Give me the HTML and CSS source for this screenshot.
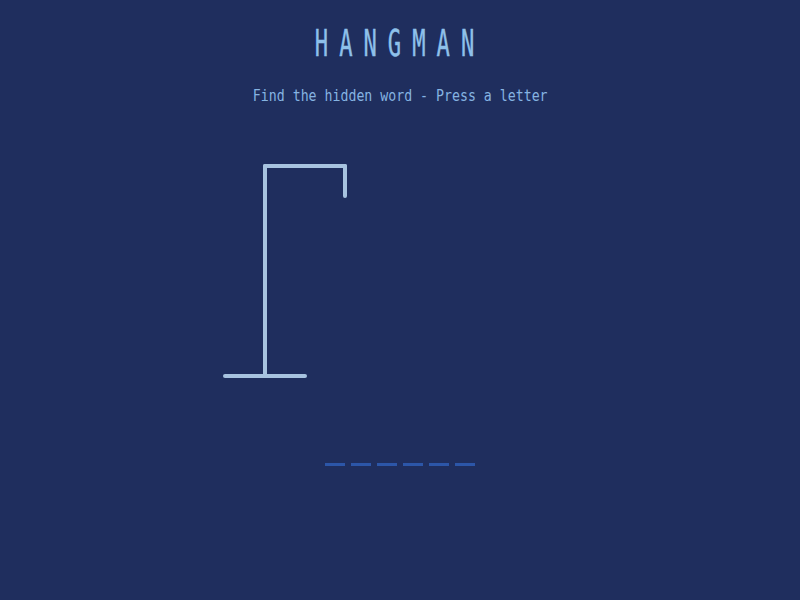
FILE: index.html
```html
<!DOCTYPE html>
<html>
<head>
<meta charset="utf-8">
<link rel="stylesheet" href="styles.css">
</head>
<body>
<main class="game">
  <h1 class="title"><span class="squeeze">HANGMAN</span></h1>
  <p class="hint"><span class="squeeze">Find the hidden word - Press a letter</span></p>
  <svg class="gallows" width="800" height="260" viewBox="0 140 800 260">
    <g stroke="#a7c3e0" stroke-width="4" stroke-linecap="round" fill="none">
      <line x1="225" y1="376" x2="305" y2="376"/>
      <line x1="265" y1="376" x2="265" y2="166"/>
      <line x1="265" y1="166" x2="345" y2="166"/>
      <line x1="345" y1="166" x2="345" y2="196"/>
    </g>
  </svg>
  <div class="word">
    <span class="slot"></span><span class="slot"></span><span class="slot"></span><span class="slot"></span><span class="slot"></span><span class="slot"></span>
  </div>
</main>
</body>
</html>
```
FILE: styles.css
```css
html, body {
  margin: 0;
  padding: 0;
  background: #1f2e5e;
}
.game {
  width: 800px;
  height: 600px;
  display: flex;
  flex-direction: column;
  align-items: center;
  font-family: "DejaVu Sans Mono", monospace;
}
.title {
  margin: 24px 0 0 0;
  height: 40px;
  font-size: 37px;
  line-height: 40px;
  font-weight: normal;
  color: #8ec0ea;
  white-space: nowrap;
}
.squeeze {
  display: inline-block;
  transform: scaleX(0.6);
}
.title .squeeze {
  letter-spacing: 18.3px;
  -webkit-text-stroke: 0.4px #8ec0ea;
}
.hint {
  margin: 22px 0 0 0;
  height: 20px;
  font-size: 16px;
  line-height: 20px;
  color: #86b4e2;
  white-space: nowrap;
}
.hint .squeeze {
  transform: scaleX(0.827);
}
.gallows {
  display: block;
  margin-top: 34px;
}
.word {
  margin-top: 63px;
  display: flex;
  gap: 6px;
}
.slot {
  width: 20px;
  height: 3px;
  background: #2c56a8;
}
```
